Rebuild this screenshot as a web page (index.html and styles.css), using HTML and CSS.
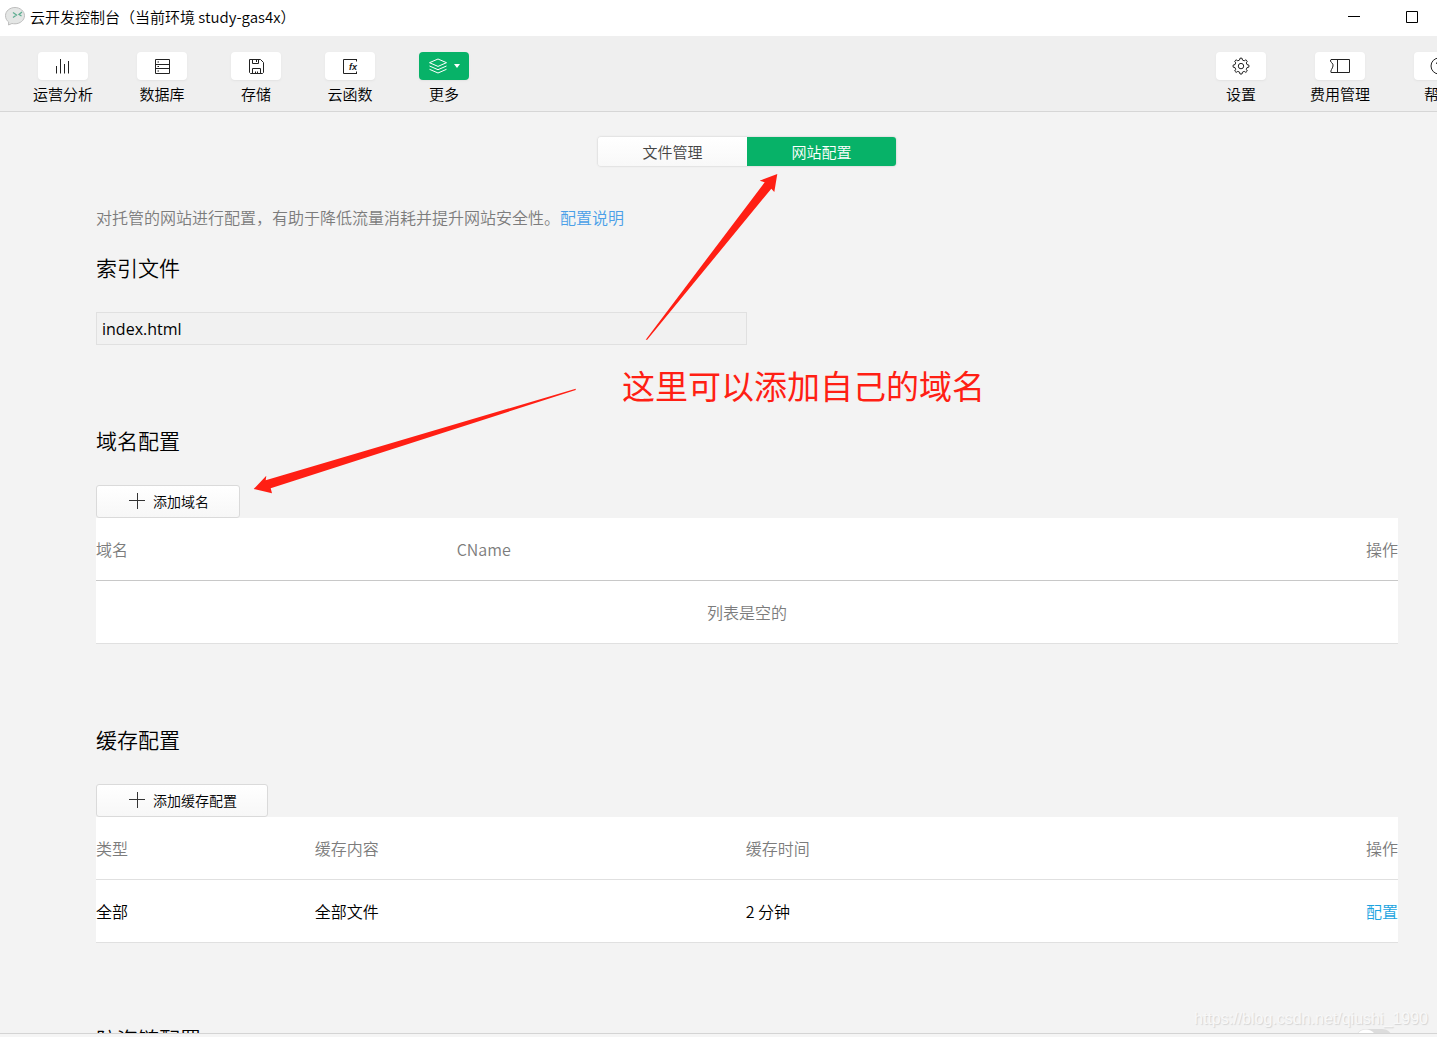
FILE: index.html
```html
<!DOCTYPE html>
<html lang="zh-CN">
<head>
<meta charset="utf-8">
<title>云开发控制台</title>
<link rel="stylesheet" href="styles.css">
</head>
<body>
<div class="window">
  <header class="titlebar">
    <svg class="logo" width="20" height="20" viewBox="0 0 20 20" aria-hidden="true">
      <path d="M10 .5C4.900.5.500 3.900.500 8.700c0 2.700 1.200 4.900 3.200 6.300L3.500 18l3.400-1.500c.9.200 2.100.3 3.100.3 5.100 0 9.500-3.600 9.500-8.100S15.100.5 10 .5z" fill="#e4e6e5" stroke="#bdbdbd"/>
      <path d="M8 5.500l3.500 2.500L8 10.500M17 5l-3 2.500 2.500 1.500" fill="none" stroke="#5fae92" stroke-width="1.300"/>
    </svg>
    <h1 class="window-title">云开发控制台（当前环境 study-gas4x）</h1>
    <div class="window-controls">
      <button class="window-button" type="button" aria-label="最小化"><svg width="12" height="12" viewBox="0 0 12 12"><path d="M0 5.500h12" stroke="#000"/></svg></button>
      <button class="window-button" type="button" aria-label="最大化"><svg width="12" height="12" viewBox="0 0 12 12"><path d="M.5.5h11v11H.5z" fill="none" stroke="#000"/></svg></button>
    </div>
  </header>

  <nav class="toolbar">
    <div class="tools">
      <button class="tool" type="button">
        <span class="tool-icon"><svg width="20" height="20" viewBox="0 0 20 20"><path d="M3.500 10v7.500M7.500 3v14.500M11.500 8v9.500M15.500 5v12.500"/></svg></span>
        <span>运营分析</span>
      </button>
      <button class="tool" type="button">
        <span class="tool-icon"><svg width="20" height="20" viewBox="0 0 20 20"><path d="M3.500 3.500h14v14h-14zM3.500 8.500h14M3.500 12.500h14M5.500 6h1.500M5.500 10.500h1.500M5.500 15h1.500"/></svg></span>
        <span>数据库</span>
      </button>
      <button class="tool" type="button">
        <span class="tool-icon"><svg width="20" height="20" viewBox="0 0 20 20"><path d="M3.500 3.500h11l3 3v10l-1 1h-12l-1-1zM6.500 3.500v4h6v-4M10.500 4v2M6.500 17.500v-5h8v5M9.500 15.500v2M11.500 15.500v2"/></svg></span>
        <span>存储</span>
      </button>
      <button class="tool" type="button">
        <span class="tool-icon"><svg width="20" height="20" viewBox="0 0 20 20"><path d="M17 3.500H3.500v14H17M16.500 3.500v2M16.500 15.500v2"/><text class="fx" x="9" y="14">fx</text></svg></span>
        <span>云函数</span>
      </button>
      <button class="tool tool-active" type="button">
        <span class="tool-icon">
          <svg width="20" height="20" viewBox="0 0 20 20"><path d="M10 3l8.500 3.700L10 10.400 1.500 6.700zM1.500 10l8.500 3.700 8.500-3.700M1.500 13.300L10 17l8.500-3.700"/></svg>
          <svg width="6" height="4" viewBox="0 0 6 4"><path class="caret" d="M0 0h6L3 4z"/></svg>
        </span>
        <span>更多</span>
      </button>
    </div>
    <div class="tools">
      <button class="tool" type="button">
        <span class="tool-icon"><svg width="20" height="20" viewBox="0 0 20 20"><path d="M8.500 4.100L9 2.200h2l.5 1.900 1.700.7 1.700-1 1.400 1.400-1 1.700.7 1.700 1.900.5v2l-1.900.5-.7 1.700 1 1.700-1.400 1.400-1.700-1-1.700.7-.5 1.900H9l-.5-1.900-1.700-.7-1.700 1L3.700 15l1-1.700-.7-1.700-1.900-.5v-2L4 8.600l.7-1.700-1-1.700 1.400-1.400 1.700 1z"/><circle cx="10" cy="10.100" r="2.700"/></svg></span>
        <span>设置</span>
      </button>
      <button class="tool" type="button">
        <span class="tool-icon"><svg width="20" height="20" viewBox="0 0 20 20"><path d="M1 3.500h18.500v13H1q-.5-1.500.5-3t1.500-3.500-1.500-3.500T1 3.500zM7.500 3.500v13"/></svg></span>
        <span>费用管理</span>
      </button>
      <button class="tool" type="button">
        <span class="tool-icon"><svg width="20" height="20" viewBox="0 0 20 20"><circle cx="10" cy="10" r="8"/><path d="M7.500 8q0-2.500 2.500-2.500T12.500 8q0 1.200-1.300 2T10 12M10 13.500V15"/></svg></span>
        <span>帮助</span>
      </button>
    </div>
  </nav>

  <main class="content">
    <div class="tabs">
      <button class="tab" type="button">文件管理</button>
      <button class="tab tab-active" type="button">网站配置</button>
    </div>

    <p class="intro">对托管的网站进行配置，有助于降低流量消耗并提升网站安全性。<a href="#help">配置说明</a></p>

    <section class="section">
      <h2 class="heading"><label for="index-file">索引文件</label></h2>
      <input class="field" id="index-file" type="text" value="index.html">
    </section>

    <section class="section">
      <h2 class="heading">域名配置</h2>
      <button class="add" type="button"><svg width="16" height="16" viewBox="0 0 16 16"><path d="M0 7.500h16M8.500 0v16"/></svg>添加域名</button>
      <table class="table table-domain">
        <thead><tr><th class="col-domain">域名</th><th>CName</th><th class="col-action">操作</th></tr></thead>
        <tbody><tr><td class="empty" colspan="3">列表是空的</td></tr></tbody>
      </table>
    </section>

    <section class="section">
      <h2 class="heading">缓存配置</h2>
      <button class="add" type="button"><svg width="16" height="16" viewBox="0 0 16 16"><path d="M0 7.500h16M8.500 0v16"/></svg>添加缓存配置</button>
      <table class="table">
        <thead><tr><th class="col-type">类型</th><th class="col-cache">缓存内容</th><th>缓存时间</th><th class="col-action">操作</th></tr></thead>
        <tbody><tr><td>全部</td><td>全部文件</td><td>2 分钟</td><td class="col-action"><a href="#configure">配置</a></td></tr></tbody>
      </table>
    </section>

    <section class="section section-switch">
      <h2 class="heading"><label for="hotlink">防盗链配置</label></h2>
      <input class="switch" id="hotlink" type="checkbox">
    </section>

    <svg class="arrows" width="526" height="322" viewBox="253 173 526 322" aria-hidden="true">
      <path d="M777.300 174l-17.600 6.700 5 1.500L645.700 339.700h1.500L771.300 188.700l3 3.300zM253.700 489l12.600-13.300-.6 4.600 310-91.600v1.300l-305 98.300 1.300 5z"/>
    </svg>
    <p class="note">这里可以添加自己的域名</p>
  </main>
  <footer class="statusbar"></footer>
</div>
<p class="watermark">https://blog.csdn.net/qiushi_1990</p>
</body>
</html>
```
FILE: styles.css
```css
* { box-sizing: border-box; }

body {
  margin: 0;
  overflow: hidden;
  background: #f3f3f3;
  color: #000;
  font-family: "Noto Sans CJK SC", "Noto Sans", sans-serif;
  font-size: 16px;
  font-weight: 350;
  line-height: 24px;
}

h1, h2, p { margin: 0; font-weight: inherit; }
button, input { font: inherit; color: inherit; }
button { padding: 0; border: 0; background: none; }

/* The window is wider than the visible screen and runs off its right side. */
.window {
  display: flex;
  flex-direction: column;
  width: calc(100% + 57px);
  height: 100vh;
}

.titlebar {
  display: flex;
  flex: none;
  align-items: center;
  height: 36px;
  padding: 0 0 2px 5px;
  background: #fff;
}
.window-title {
  margin-left: 5px;
  font-size: 15px;
}
.window-controls { display: flex; margin-left: auto; padding-right: 53px; }
.window-button { width: 58px; height: 32px; }
.window-button svg { display: block; margin: auto; }

.toolbar {
  display: flex;
  flex: none;
  justify-content: space-between;
  height: 76px;
  padding: 16px 30px 0 33px;
  border-bottom: 1px solid #d6d6d6;
  background: #efefef;
}
.tools { display: flex; gap: 44px; }
.tool {
  display: flex;
  flex-direction: column;
  gap: 4px;
  align-items: center;
  height: 52px;
  font-size: 15px;
  line-height: 20px;
}
.tool-icon {
  display: flex;
  gap: 6px;
  align-items: center;
  justify-content: center;
  width: 50px;
  height: 28px;
  border-radius: 4px;
  background: #fff;
  box-shadow: 0 1px 2px #e2e2e2;
}
.tool-icon svg { fill: none; stroke: #222; }
.tool-icon .fx { fill: #222; stroke: none; font: italic 600 9px "Liberation Sans", sans-serif; }
.tool-active .tool-icon { background: #07b268; }
.tool-active .tool-icon svg { stroke: #fff; }
.tool-active .caret { fill: #fff; stroke: none; }

.content {
  position: relative;
  flex: 1;
  min-height: 0;
  padding: 25px 96px 0;
  overflow: hidden;
}

.tabs {
  display: grid;
  grid-template-columns: 1fr 1fr;
  width: 298px;
  height: 29px;
  margin: 0 auto 39px;
  border-radius: 3px;
  box-shadow: 0 0 2px #bbb;
  overflow: hidden;
}
.tab { background: linear-gradient(#fff, #f8f8f8); color: #444; font-size: 15px; }
.tab-active { background: #07b268; color: #fff; }

.intro { margin-bottom: 23px; color: #7c7c7c; }
a { color: #4a9fe8; text-decoration: none; }

.section { margin-bottom: 80px; }
.heading { margin-bottom: 30px; font-size: 21px; line-height: 30px; }

.field {
  display: block;
  width: 50%;
  height: 33px;
  padding: 0 5px;
  border: 1px solid #e0e0e0;
  background: #f1f1f1;
  font-family: "Open Sans", "Noto Sans CJK SC", sans-serif;
  font-weight: 400;
}

.add {
  display: flex;
  gap: 8px;
  align-items: center;
  height: 33px;
  padding: 0 30px 1px 32px;
  border: 1px solid #dadada;
  border-radius: 3px;
  background: linear-gradient(#fff, #f7f7f7);
  font-size: 14px;
}
.add svg { fill: none; stroke: #333; }

.table {
  width: 100%;
  border-spacing: 0;
  background: #fff;
  table-layout: fixed;
}
.table th, .table td {
  height: 63px;
  padding: 0;
  border-bottom: 1px solid #e0e0e0;
  font-weight: inherit;
  text-align: left;
}
.table th { color: #7c7c7c; }
.table-domain th { border-bottom-color: #c8c8c8; }
.table .empty { color: #7c7c7c; text-align: center; }
.table .col-action { width: 60px; text-align: right; }
.col-domain { width: 27.7%; }
.col-type { width: 16.8%; }
.col-cache { width: 33.1%; }
.table a { color: #1aa3e0; }

.section-switch { display: flex; align-items: flex-start; justify-content: space-between; }
.switch {
  width: 38px;
  height: 22px;
  margin: 6px 5px 0 0;
  border-radius: 11px;
  background: radial-gradient(circle at 11px 11px, #fff 10px, #dcdcdc 11px);
  appearance: none;
}

.arrows {
  position: absolute;
  top: 61px;
  left: 253px;
  fill: #ff1f14;
}
.note {
  position: absolute;
  top: 249px;
  left: 622px;
  color: #ff1f14;
  font-size: 33px;
  font-weight: 400;
  line-height: 48px;
}

.statusbar { flex: none; height: 4px; border-top: 1px solid #d4d4d4; background: #f5f5f5; }

.watermark {
  position: absolute;
  right: 9px;
  bottom: 6px;
  color: #f8f8f8;
  font-family: "Liberation Sans", sans-serif;
  font-size: 16px;
  font-weight: 400;
  text-shadow: 1px 1px 1px #d4d4d4;
}
```
